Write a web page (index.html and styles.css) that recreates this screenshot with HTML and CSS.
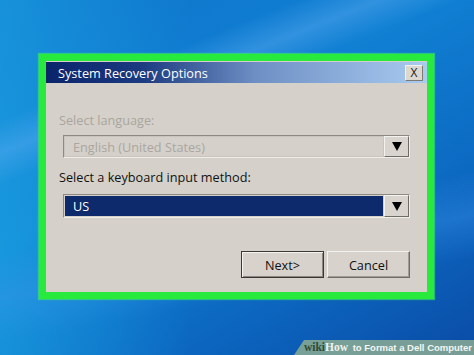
FILE: index.html
```html
<!DOCTYPE html>
<html>
    <head>
        <title>System Recovery Options</title>
        <link rel="stylesheet" href="styles.css">
    </head>
    <body>
        <div class="desktop">
            <div class="highlight">
                <div class="dialog">
                    <div class="titlebar">
                        <span class="title">System Recovery Options</span>
                        <button class="close-btn" type="button">X</button>
                    </div>
                    <div class="dialog-body">
                        <div class="label disabled">Select language:</div>
                        <div class="combo disabled">
                            <div class="combo-value">English (United States)</div>
                            <div class="combo-arrow"><span class="triangle"></span></div>
                        </div>
                        <div class="label">Select a keyboard input method:</div>
                        <div class="combo selected">
                            <div class="combo-value">US</div>
                            <div class="combo-arrow"><span class="triangle"></span></div>
                        </div>
                        <div class="actions">
                            <button class="btn default" type="button">Next&gt;</button>
                            <button class="btn" type="button">Cancel</button>
                        </div>
                    </div>
                </div>
            </div>
            <div class="watermark">
                <span class="wm-wiki">wiki</span><span class="wm-how">How</span> to Format a Dell Computer
            </div>
        </div>
    </body>
</html>
```

FILE: styles.css
```css
:root {
    --face: #d5d1ca;
    --green: #27ea3c;
    --navy: #0c2a6c;
    --ui-font: "Open Sans", "Noto Sans", sans-serif;
    --ui-size: 12.7px;
}

*, *::before, *::after {
    box-sizing: border-box;
}

body {
    margin: 0px;
    width: 474px;
    height: 355px;
    overflow: hidden;
}

.desktop {
    position: relative;
    width: 474px;
    height: 355px;
    padding: 54px 0px 0px 39px;
    background:
        linear-gradient(158deg, transparent 0%, transparent 22%, rgba(90, 170, 240, 0.45) 28%, transparent 34%),
        linear-gradient(170deg, transparent 58%, rgba(60, 150, 235, 0.35) 68%, transparent 78%),
        linear-gradient(90deg, rgba(30, 170, 230, 0.55) 0%, rgba(30, 170, 230, 0) 40%),
        linear-gradient(150deg, #0f74cb 0%, #1080d3 40%, #0c69c2 70%, #0a4ca6 100%);
    font-family: var(--ui-font);
}

.highlight {
    width: 395px;
    height: 245px;
    border: 7px solid var(--green);
    box-shadow: 0px 0px 1px 1px rgba(60, 240, 90, 0.6);
}

.dialog {
    height: 100%;
    background-color: var(--face);
    padding: 1px 0px 0px 0px;
    display: flex;
    flex-direction: column;
}

.titlebar {
    display: flex;
    align-items: center;
    justify-content: space-between;
    height: 21px;
    padding: 0px 4px 0px 12px;
    background: linear-gradient(90deg, #0a246a 0%, #1b3a80 25%, #6e8fc4 55%, #a8cbf0 100%);
}

.title {
    color: #fff;
    font-size: var(--ui-size);
}

.close-btn {
    width: 18px;
    height: 16px;
    padding: 0px;
    margin: 0px;
    font-family: var(--ui-font);
    font-size: 12px;
    line-height: 14px;
    color: #222;
    background-color: #dcd8d0;
    border: 1px solid;
    border-color: #f4f2ee #7d7a74 #7d7a74 #f4f2ee;
}

.dialog-body {
    flex: 1;
    padding: 29px 17px 0px 17px;
}

.label {
    font-size: var(--ui-size);
    line-height: 16px;
    margin-left: -4px;
    color: #111;
}

.label.disabled {
    color: #a9a59e;
}

.combo {
    display: flex;
    height: 23px;
    margin: 7px 0px 11px 0px;
    border: 1px solid;
    border-color: #8e8a83 #f0eee9 #f0eee9 #8e8a83;
}

.combo-value {
    flex: 1;
    display: flex;
    align-items: center;
    padding-left: 8px;
    font-size: var(--ui-size);
}

.combo.disabled .combo-value {
    color: #aaa69f;
    border: 1px solid #c9c5be;
}

.combo.selected {
    height: 24px;
    margin-top: 9px;
}

.combo.selected .combo-value {
    color: #fff;
    background-color: var(--navy);
    border: 1px solid #d5d1ca;
}

.combo-arrow {
    width: 25px;
    display: flex;
    align-items: center;
    justify-content: center;
    background-color: #d9d5ce;
    border: 1px solid;
    border-color: #f4f2ee #6f6c66 #6f6c66 #f4f2ee;
}

.triangle {
    width: 0px;
    height: 0px;
    border-left: 5px solid transparent;
    border-right: 5px solid transparent;
    border-top: 9px solid #000;
}

.actions {
    display: flex;
    justify-content: flex-end;
    gap: 3px;
    margin-top: 33px;
}

.btn {
    width: 83px;
    height: 27px;
    padding: 0px;
    font-family: var(--ui-font);
    font-size: var(--ui-size);
    color: #111;
    background-color: #d7d3cc;
    border: 1px solid;
    border-color: #f4f2ee #6f6c66 #6f6c66 #f4f2ee;
    box-shadow: inset -1px -1px 0px #a19d96;
}

.btn.default {
    border: 1px solid #3a3835;
    box-shadow: inset 1px 1px 0px #f4f2ee, inset -1px -1px 0px #8a8680;
}

.watermark {
    position: absolute;
    right: 0px;
    bottom: 0px;
    height: 15px;
    padding: 0px 2px 0px 10px;
    clip-path: polygon(10px 0%, 100% 0%, 100% 100%, 0% 100%);
    background-color: rgba(135, 168, 148, 0.88);
    color: #f4f6f2;
    font-family: "Liberation Sans", sans-serif;
    font-weight: bold;
    font-size: 9.5px;
    line-height: 15px;
    white-space: nowrap;
}

.wm-wiki {
    color: #2f4a33;
    font-family: "Liberation Serif", serif;
    font-size: 11.5px;
}

.wm-how {
    color: #eef2ec;
    font-family: "Liberation Serif", serif;
    font-size: 11.5px;
    margin-right: 2px;
}
```
